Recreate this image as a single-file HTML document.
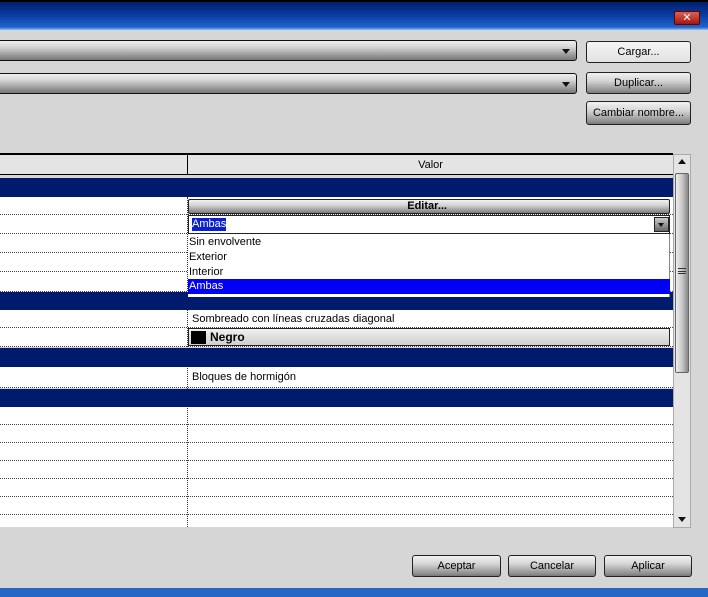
<!DOCTYPE html>
<html><head><meta charset="utf-8"><style>
*{margin:0;padding:0;box-sizing:border-box}
body{width:708px;height:597px;overflow:hidden;background:#d6d6d6;position:relative;font-family:"Liberation Sans","DejaVu Sans",sans-serif;font-size:11px;color:#000}
.a{position:absolute}
.combo{background:linear-gradient(#eee,#d8d8d8 30%,#8a8a8a 85%,#777);border:1px solid #111;border-radius:3px}
.btn{background:linear-gradient(#f2f2f2,#d4d4d4 40%,#8c8c8c 90%,#777);border:1px solid #222;border-radius:3px;text-align:center;font-size:11px;line-height:20px}
.blue{background:#001a6e}
.row{background:#fff;border-bottom:1px dotted #444}
.tri{position:absolute;width:0;height:0;border-left:4px solid transparent;border-right:4px solid transparent;border-top:5px solid #111}
</style></head><body>
<div class="a" style="left:0;top:0;width:708px;height:2px;background:#000"></div>
<div class="a" style="left:0;top:2px;width:708px;height:28px;background:linear-gradient(#001f6a,#0a3aa0 45%,#1e64cc 90%,#9ac0ee)"></div>
<div class="a" style="left:674px;top:11px;width:26px;height:14px;background:linear-gradient(#e06050,#a01810);border:1px solid #600;border-radius:2px;color:#fff;font-weight:bold;font-size:11px;text-align:center;line-height:12px">✕</div>

<div class="a combo" style="left:-4px;top:40px;width:581px;height:21px"><div class="tri" style="left:565px;top:8px"></div></div>
<div class="a combo" style="left:-4px;top:73px;width:581px;height:21px"><div class="tri" style="left:565px;top:8px"></div></div>
<div class="a btn" style="left:586px;top:41px;width:105px;height:22px;background:linear-gradient(#f4f4f4,#e2e2e2)">Cargar...</div>
<div class="a btn" style="left:586px;top:72px;width:105px;height:22px">Duplicar...</div>
<div class="a btn" style="left:586px;top:101px;width:105px;height:24px;line-height:22px">Cambiar nombre...</div>

<div class="a" style="left:0;top:153px;width:673px;height:2px;background:#000"></div>
<div class="a" style="left:0;top:155px;width:673px;height:20px;background:#e4e4e4;border-bottom:1px solid #000"></div>
<div class="a" style="left:187px;top:155px;width:1px;height:20px;background:#000"></div>
<div class="a" style="left:188px;top:155px;width:485px;height:20px;text-align:center;line-height:20px">Valor</div>

<div class="a blue" style="left:0;top:178px;width:673px;height:19px"></div>
<div class="a row" style="left:0;top:197px;width:673px;height:18px"></div>
<div class="a row" style="left:0;top:215px;width:673px;height:19px"></div>
<div class="a row" style="left:0;top:234px;width:673px;height:19px"></div>
<div class="a row" style="left:0;top:253px;width:673px;height:19px"></div>
<div class="a row" style="left:0;top:272px;width:673px;height:20px"></div>
<div class="a blue" style="left:0;top:292px;width:673px;height:18px"></div>
<div class="a row" style="left:0;top:310px;width:673px;height:18px"></div>
<div class="a row" style="left:0;top:328px;width:673px;height:19px"></div>
<div class="a blue" style="left:0;top:348px;width:673px;height:19px"></div>
<div class="a row" style="left:0;top:367px;width:673px;height:21px"></div>
<div class="a blue" style="left:0;top:389px;width:673px;height:18px"></div>
<div class="a row" style="left:0;top:407px;width:673px;height:18px"></div>
<div class="a row" style="left:0;top:425px;width:673px;height:18px"></div>
<div class="a row" style="left:0;top:443px;width:673px;height:18px"></div>
<div class="a row" style="left:0;top:461px;width:673px;height:18px"></div>
<div class="a row" style="left:0;top:479px;width:673px;height:18px"></div>
<div class="a row" style="left:0;top:497px;width:673px;height:18px"></div>
<div class="a" style="left:0;top:515px;width:673px;height:12px;background:#fff"></div>
<div class="a" style="left:187px;top:197px;width:0;height:330px;border-left:1px dotted #333"></div>
<div class="a blue" style="left:187px;top:292px;width:1px;height:18px"></div>
<div class="a blue" style="left:187px;top:348px;width:1px;height:19px"></div>
<div class="a blue" style="left:187px;top:389px;width:1px;height:18px"></div>

<div class="a btn" style="left:188px;top:199px;width:482px;height:15px;line-height:13px;text-align:right;padding-right:222px;font-weight:bold;border-radius:2px">Editar...</div>
<div class="a" style="left:188px;top:215px;width:482px;height:19px;background:#fff;border:1px solid #222"><span style="background:#0a1fd0;color:#fff;margin:2px 0 0 3px;display:inline-block;line-height:13px">Ambas</span></div>
<div class="a" style="left:654px;top:217px;width:15px;height:15px;background:linear-gradient(#ccc,#666);border:1px solid #222"><div class="tri" style="left:3px;top:5px;border-left-width:3px;border-right-width:3px;border-top-width:4px"></div></div>
<div class="a" style="left:188px;top:234px;width:482px;height:63px;background:#fff;border-right:1px solid #888">
<div style="position:absolute;left:1px;top:1px;line-height:15px">Sin envolvente<br>Exterior<br>Interior</div>
<div style="position:absolute;left:0;top:45px;width:482px;height:15px;background:#0000f5;color:#fff;line-height:15px;padding-left:1px">Ambas</div>
</div>
<div class="a" style="left:192px;top:311px;line-height:16px">Sombreado con líneas cruzadas diagonal</div>
<div class="a" style="left:188px;top:328px;width:482px;height:18px;background:linear-gradient(#f0f0f0,#cfcfcf);border:1px solid #222"><div style="position:absolute;left:2px;top:2px;width:15px;height:13px;background:#000"></div><span style="position:absolute;left:21px;top:1px;font-weight:bold;font-size:12px;line-height:15px">Negro</span></div>
<div class="a" style="left:192px;top:369px;line-height:16px">Bloques de hormigón</div>

<div class="a" style="left:673px;top:154px;width:18px;height:374px;background:#e4e4e4;border:1px solid #aaa"></div>
<div class="a" style="left:675px;top:173px;width:14px;height:200px;background:linear-gradient(90deg,#eee,#c8c8c8 50%,#888);border:1px solid #666;border-radius:2px"></div>
<div class="a" style="left:678px;top:268px;width:8px;height:6px;border-top:1px solid #333;border-bottom:1px solid #333"></div>
<div class="a" style="left:678px;top:271px;width:8px;height:1px;background:#333"></div>
<div class="a" style="left:678px;top:159px;width:0;height:0;border-left:4px solid transparent;border-right:4px solid transparent;border-bottom:5px solid #111"></div>
<div class="tri" style="left:678px;top:517px"></div>
<div class="a" style="left:691px;top:30px;width:17px;height:560px;background:#d6d6d6"></div>

<div class="a btn" style="left:412px;top:555px;width:89px;height:22px">Aceptar</div>
<div class="a btn" style="left:508px;top:555px;width:88px;height:22px">Cancelar</div>
<div class="a btn" style="left:604px;top:555px;width:88px;height:22px">Aplicar</div>
<div class="a" style="left:0;top:588px;width:708px;height:9px;background:#2468c4"></div>
</body></html>
